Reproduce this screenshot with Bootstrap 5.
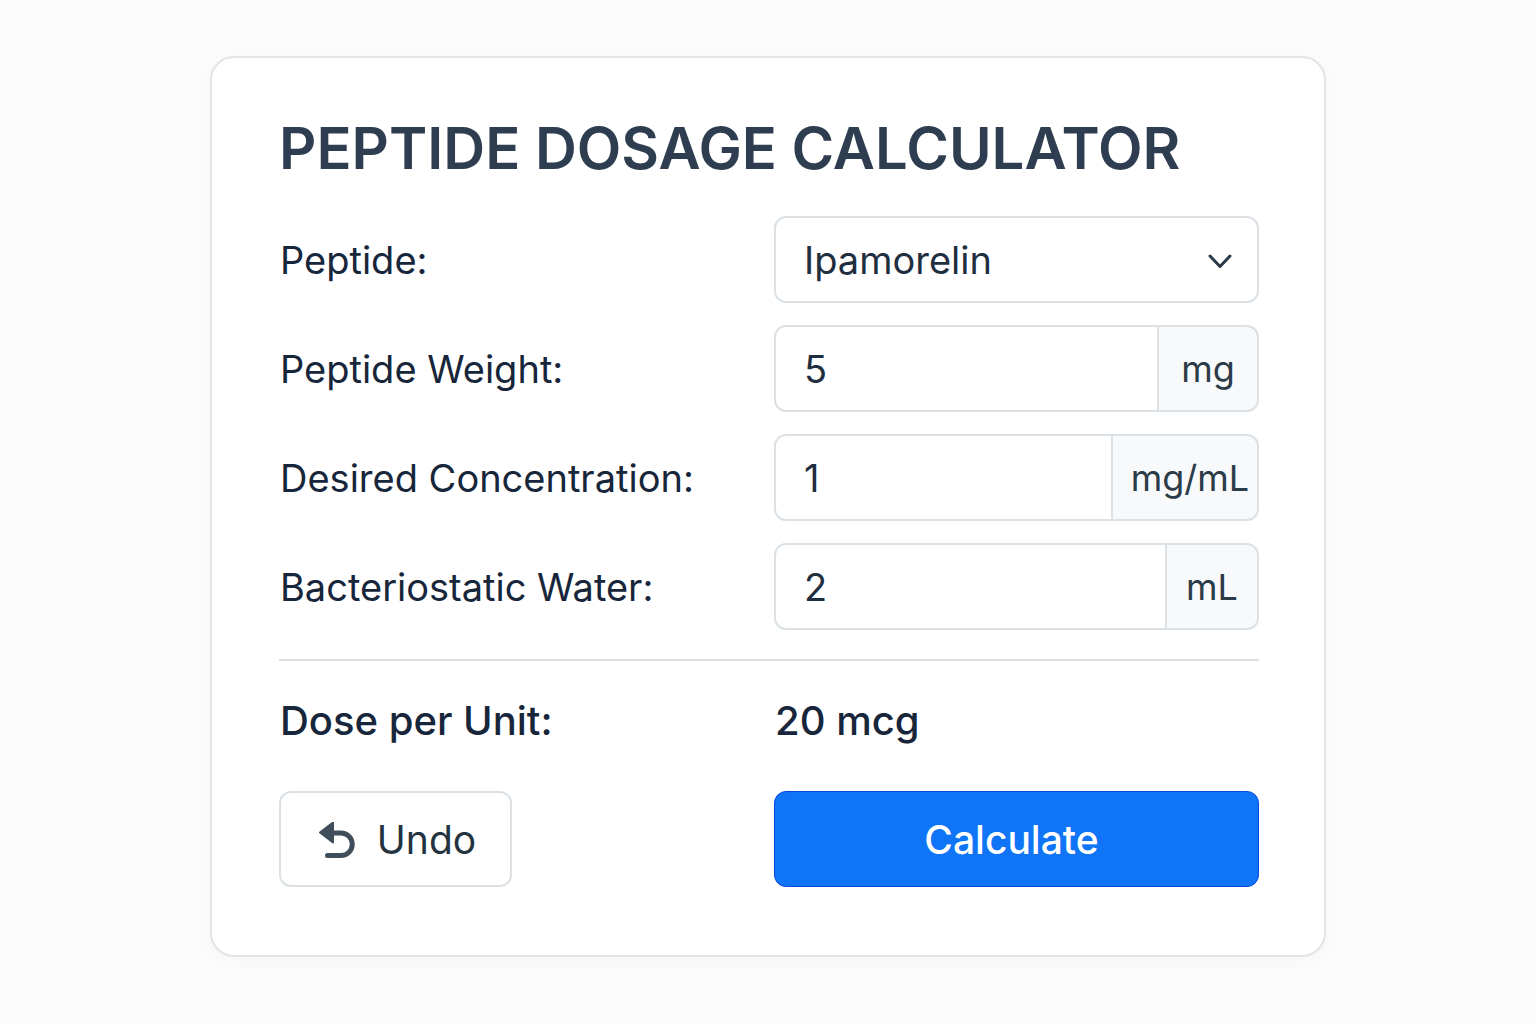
<!DOCTYPE html>
<html lang="en">
<head>
<meta charset="utf-8">
<meta name="viewport" content="width=device-width, initial-scale=1">
<title>Peptide Dosage Calculator</title>
<link href="https://cdn.jsdelivr.net/npm/bootstrap@5.3.0/dist/css/bootstrap.min.css" rel="stylesheet">
<style>
body { background: #fcfcfc; color: #17263a; font-family: Inter, "Liberation Sans", sans-serif; font-size: 38px; padding-bottom: 12px; }
.calc-card { max-width: 1116px; border: 2px solid #e1e5e8; border-radius: 24px; padding: 56px 65px 68px 67px; box-shadow: 0 4px 20px rgba(0,0,0,.03); }
.calc-title { font-size: 58px; font-weight: 580; line-height: 68px; color: #2e3e50; margin-bottom: 34px; }
.calc-grid { display: grid; grid-template-columns: minmax(0, 495fr) minmax(0, 485fr); align-items: center; row-gap: 22px; }
.calc-grid label { line-height: 48px; padding: 2px 0 0 1px; }
.calc-field { height: 87px; font-size: 38px; color: #1f2f3f; border: 2px solid #dce1e5; border-radius: 12px; padding: 2px 28px 0; }
.form-select.calc-field { background-image: none; }
.chevron { right: 26px; top: 35px; pointer-events: none; }
.input-group > .calc-unit { font-size: 36px; color: #2c3b48; background: #f8f9fa; border: 2px solid #dce1e5; border-radius: 12px; justify-content: center; padding: 2px 0 0; margin-left: -2px !important; }
.unit-mg { width: 102px; }
.input-group > .unit-conc { width: 148px; padding-left: 10px; }
.unit-ml { width: 94px; }
.calc-rule { border-top: 2px solid #dce1e5; opacity: 1; margin: 29px 0 36px; }
.calc-result { font-size: 40px; font-weight: 500; line-height: 48px; }
.calc-result > * { padding-left: 1px; }
.calc-actions { margin-top: 46px; }
.calc-btn { height: 96px; font-size: 39px; border-radius: 12px; border-width: 2px; }
.btn-undo { width: 233px; border-color: #dce1e5; background: #fff; color: #22323f; padding: 4px 0 0 4px; }
.btn-undo svg { margin-right: 22px; }
.btn-calc { background: #1074f7; border: 1px solid #0948dd; font-weight: 500; padding: 4px 22px 0 12px; }
</style>
<script src="https://cdn.jsdelivr.net/npm/bootstrap@5.3.0/dist/js/bootstrap.bundle.min.js"></script>
</head>
<body class="min-vh-100 d-flex align-items-center justify-content-center">
<main class="calc-card bg-white w-100">
<h1 class="calc-title">PEPTIDE DOSAGE CALCULATOR</h1>
<form>
<div class="calc-grid">
<label for="peptide">Peptide:</label>
<div class="position-relative">
<select id="peptide" class="form-select calc-field"><option>Ipamorelin</option><option>Sermorelin</option></select>
<svg class="chevron position-absolute" width="26" height="18" viewBox="0 0 26 18" fill="none" stroke="#2b3a47" stroke-width="3" stroke-linecap="round" stroke-linejoin="round" aria-hidden="true"><path d="M3 5l10 10.500L23 5"/></svg>
</div>
<label for="weight">Peptide Weight:</label>
<div class="input-group"><input id="weight" class="form-control calc-field" value="5" inputmode="decimal"><span class="input-group-text calc-unit unit-mg">mg</span></div>
<label for="concentration">Desired Concentration:</label>
<div class="input-group"><input id="concentration" class="form-control calc-field" value="1" inputmode="decimal"><span class="input-group-text calc-unit unit-conc">mg/mL</span></div>
<label for="water">Bacteriostatic Water:</label>
<div class="input-group"><input id="water" class="form-control calc-field" value="2" inputmode="decimal"><span class="input-group-text calc-unit unit-ml">mL</span></div>
</div>
<hr class="calc-rule">
<div class="calc-grid calc-result"><span>Dose per Unit:</span><output for="weight concentration water">20 mcg</output></div>
<div class="calc-grid calc-actions">
<div class="d-flex"><button type="reset" class="btn calc-btn btn-undo d-inline-flex align-items-center justify-content-center"><svg width="36" height="38" viewBox="0 0 36 38" aria-hidden="true"><path d="M1 10.500L14 0.500v20z" fill="#3f4e5a" stroke="#3f4e5a" stroke-width="2" stroke-linejoin="round"/><path d="M13 11h9a11.250 11.250 0 0 1 0 22.500H8.500" fill="none" stroke="#3f4e5a" stroke-width="5" stroke-linecap="round"/></svg>Undo</button></div>
<button type="button" class="btn btn-primary calc-btn btn-calc">Calculate</button>
</div>
</form>
</main>
</body>
</html>
